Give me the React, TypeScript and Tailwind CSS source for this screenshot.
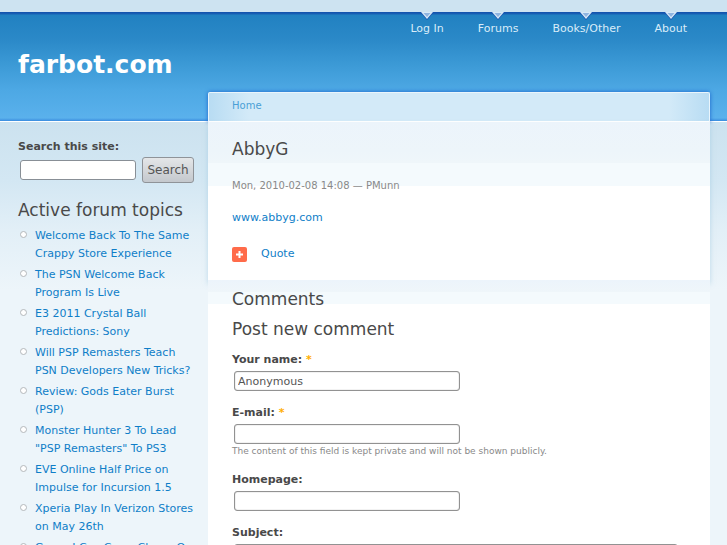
import React from "react";

const navItems = ["Log In", "Forums", "Books/Other", "About"];

const topics = [
  "Welcome Back To The Same Crappy Store Experience",
  "The PSN Welcome Back Program Is Live",
  "E3 2011 Crystal Ball Predictions: Sony",
  "Will PSP Remasters Teach PSN Developers New Tricks?",
  "Review: Gods Eater Burst (PSP)",
  'Monster Hunter 3 To Lead "PSP Remasters" To PS3',
  "EVE Online Half Price on Impulse for Incursion 1.5",
  "Xperia Play In Verizon Stores on May 26th",
  "Guess I Can Cross Clump On",
];

function NavArrow() {
  return (
    <svg width="14" height="8" viewBox="0 0 14 8" aria-hidden="true">
      <path d="M0 0H14L7 8Z" fill="#1b56b0" />
      <path d="M1 0H13L7 7Z" fill="#d8e9f7" />
      <path d="M3.5 1H10.5L7 5Z" fill="#8fb4e0" />
    </svg>
  );
}

type FieldProps = {
  id: string;
  label: string;
  required?: boolean;
  value?: string;
  hint?: string;
  wide?: boolean;
};

function Field({ id, label, required, value, hint, wide }: FieldProps) {
  return (
    <div className="mb-3">
      <label htmlFor={id} className="block leading-5 font-bold">
        {label}: {required && <span className="text-[#ffae00]">*</span>}
      </label>
      <input
        id={id}
        type="text"
        defaultValue={value}
        className={
          "mx-0.5 mt-px block h-5 rounded-[3px] border border-[#929292] bg-white px-[3px] text-[#555] shadow-[inset_0_0_1px_#777] " +
          (wide ? "w-[444px] max-w-full" : "w-[226px]")
        }
      />
      {hint && <p className="text-[9px] leading-[14px] text-[#898989]">{hint}</p>}
    </div>
  );
}

export default function App() {
  return (
    <div className="min-h-screen bg-[#edf5fa] bg-[linear-gradient(#cde3f1_12px,#1150ac_12px,#1961b4_14px,#2181c1_15px,#2b89c8_40px,#3c9ad6_65px,#4da8e4_90px,#5ab1ec_118px,#3a8cdf_121px,#fff_121px,#fff_122px,#cce2ef_122px,#d3e7f3_180px,#e2eff7_230px,#edf5fa_290px)] pt-3 font-['DejaVu_Sans',sans-serif] text-[11px] text-[#494949]">
      <nav className="flex h-8 justify-end gap-[34px] pr-10">
        {navItems.map((item) => (
          <a key={item} href="#" className="flex flex-col items-center leading-[18px] text-[#d9ecf9]">
            <NavArrow />
            {item}
          </a>
        ))}
      </nav>
      <div className="flex">
        <aside className="w-52 shrink-0 pl-[18px]">
          <h1 className="h-[77px] pt-1 text-[25px] leading-[34px] font-bold text-white">
            <a href="#">farbot.com</a>
          </h1>
          <form className="pt-4" onSubmit={(e) => e.preventDefault()}>
            <label htmlFor="search" className="block leading-5 font-bold">
              Search this site:
            </label>
            <div className="flex items-center gap-1.5 pl-0.5">
              <input
                id="search"
                type="text"
                className="h-5 w-[116px] rounded-[3px] border border-[#888f96] bg-white px-1"
              />
              <button className="h-[26px] w-[52px] rounded-[3px] border border-[#8f9398] bg-linear-to-b from-[#e4e6e8] to-[#c4c8cd] text-[12px] text-[#555]">
                Search
              </button>
            </div>
          </form>
          <h2 className="mt-4 mb-1.5 text-[17px] leading-[22px]">Active forum topics</h2>
          <ul>
            {topics.map((topic) => (
              <li key={topic} className="flex gap-2 pb-[3px] pl-0.5">
                <span className="mt-1 size-[7px] shrink-0 rounded-full border border-[#b4b8bb] bg-white" />
                <a href="#" className="w-40 leading-[18px] text-[#0f7ec8]">
                  {topic}
                </a>
              </li>
            ))}
          </ul>
        </aside>
        <main className="mt-12 mr-[17px] min-w-0 flex-1">
          <div className="h-[30px] rounded-t-[2px] border border-b-white border-[#eaf5fc] bg-[linear-gradient(90deg,#b8dcf3,#d3eaf8_40px,#d3eaf8_calc(100%-40px),#b8dcf3)] pl-[23px] text-[10px] leading-[26px] shadow-[0_0_4px_#1a62cc]">
            <a href="#" className="text-[#4a9fd6]">
              Home
            </a>
          </div>
          <article className="h-[158px] bg-[linear-gradient(#ecf4fb,#edf5fa_28px,#eff6fa_41px,#f4fafd_41px,#f4fafd_64px,#fff_64px)] px-6 pt-4 shadow-[0_4px_5px_#8fbfdc80]">
            <h2 className="text-[17px] leading-[22px]">AbbyG</h2>
            <p className="mt-4 text-[10px] leading-5 text-[#898989]">Mon, 2010-02-08 14:08 — PMunn</p>
            <p className="mt-3 leading-5">
              <a href="#" className="text-[#0f7ec8]">
                www.abbyg.com
              </a>
            </p>
            <p className="mt-4 flex items-center gap-[14px] leading-5">
              <svg width="15" height="15" viewBox="0 0 15 15" aria-hidden="true">
                <rect width="15" height="15" rx="2" fill="#ff6b4a" />
                <path d="M7.5 4V11M4 7.5H11" stroke="#fff" strokeWidth="2" />
              </svg>
              <a href="#" className="text-[#0f7ec8]">
                Quote
              </a>
            </p>
          </article>
          <section className="relative bg-[linear-gradient(#ecf4fb,#eff6fa_12px,#f4fafd_12px,#f4fafd_24px,#fff_24px)] px-6 pt-2">
            <h2 className="text-[17px] leading-[22px]">Comments</h2>
            <h2 className="mt-2 mb-2.5 text-[17px] leading-[22px]">Post new comment</h2>
            <form>
              <Field id="name" label="Your name" required value="Anonymous" />
              <Field
                id="mail"
                label="E-mail"
                required
                hint="The content of this field is kept private and will not be shown publicly."
              />
              <Field id="homepage" label="Homepage" />
              <Field id="subject" label="Subject" wide />
            </form>
          </section>
        </main>
      </div>
    </div>
  );
}
